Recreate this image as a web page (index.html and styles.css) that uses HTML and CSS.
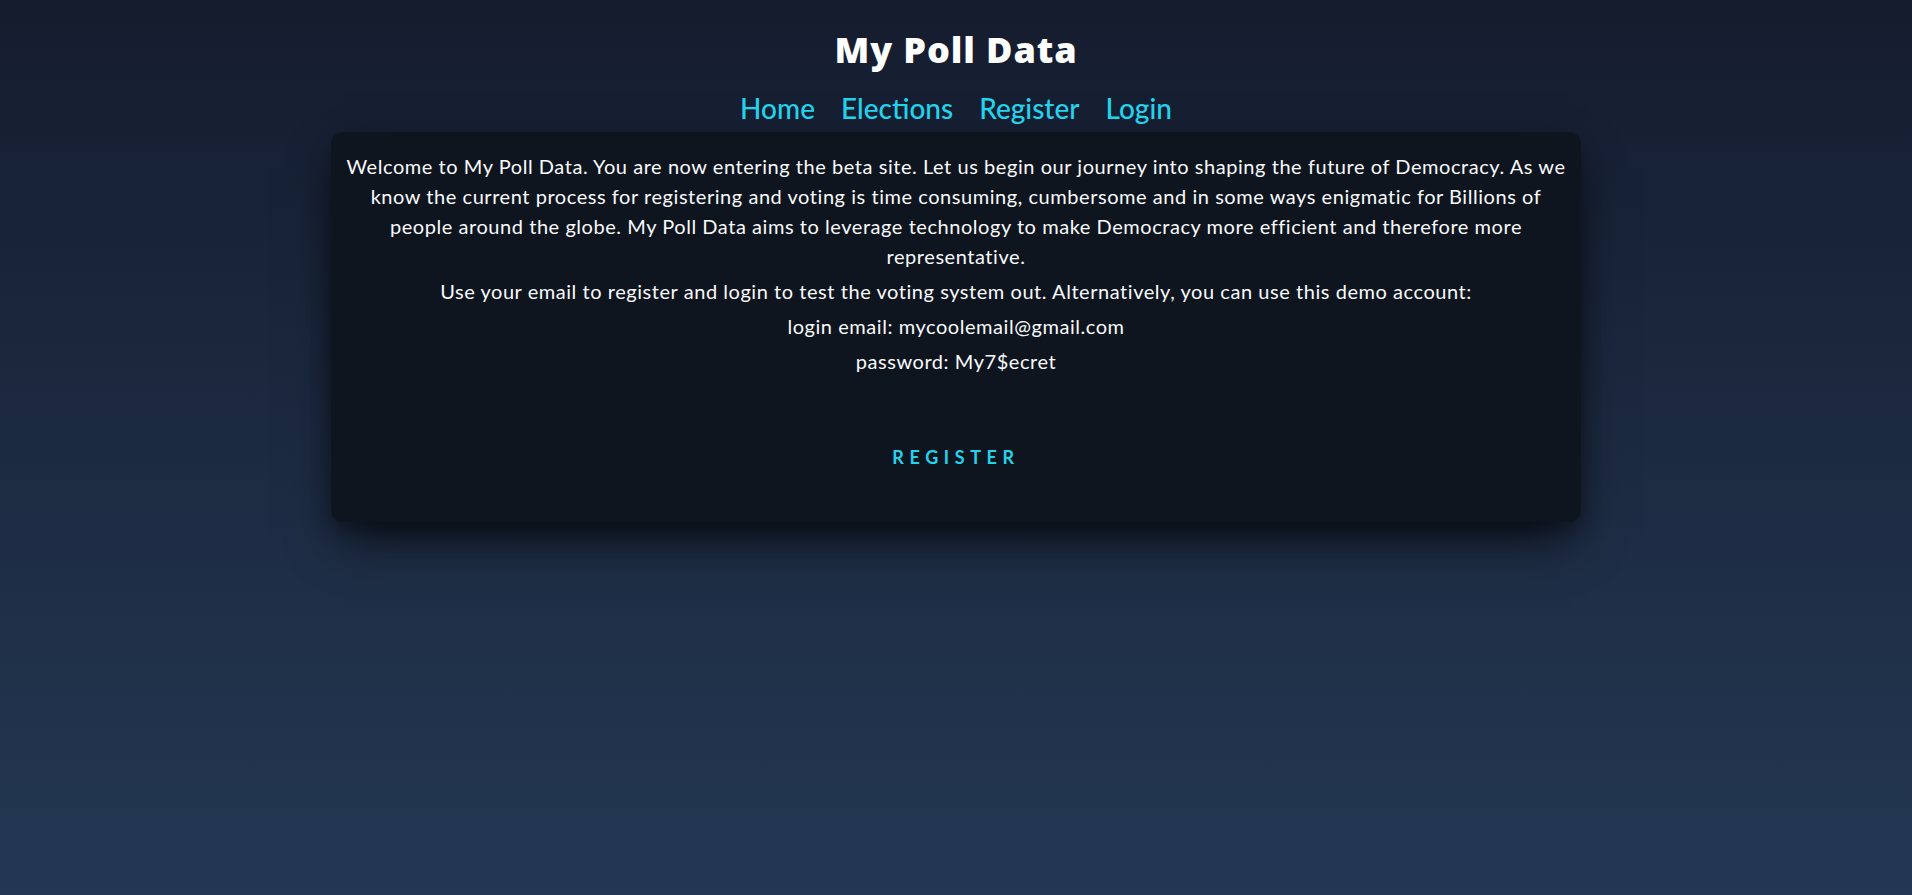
FILE: index.html
```html
<!DOCTYPE html>
<html lang="en">
<head>
<meta charset="utf-8">
<title>My Poll Data</title>
<link rel="stylesheet" href="styles.css">
</head>
<body>
<header class="site-header">
  <h1 class="site-title">My Poll Data</h1>
  <nav class="site-nav">
    <a href="#" class="nav-link">Home</a>
    <a href="#" class="nav-link">Elections</a>
    <a href="#" class="nav-link">Register</a>
    <a href="#" class="nav-link">Login</a>
  </nav>
</header>
<main class="card">
  <p class="intro">Welcome to My Poll Data. You are now entering the beta site. Let us begin our journey into shaping the future of Democracy. As we know the current process for registering and voting is time consuming, cumbersome and in some ways enigmatic for Billions of people around the globe. My Poll Data aims to leverage technology to make Democracy more efficient and therefore more representative.</p>
  <p class="intro">Use your email to register and login to test the voting system out. Alternatively, you can use this demo account:</p>
  <p class="intro">login email: mycoolemail@gmail.com</p>
  <p class="intro">password: My7$ecret</p>
  <div class="actions">
    <a href="#" class="register-btn">Register</a>
  </div>
</main>
</body>
</html>
```

FILE: styles.css
```css
html, body {
  margin: 0;
  padding: 0;
}

body {
  min-height: 100vh;
  background: linear-gradient(to bottom, #151c2e 0%, #1c2a41 50%, #243853 100%);
  font-family: "Lato", "Noto Sans", sans-serif;
  color: #f8fafc;
}

.site-header {
  display: flex;
  flex-direction: column;
  align-items: center;
  padding-top: 23px;
}

.site-title {
  margin: 0;
  font-family: "Open Sans", "Lato", sans-serif;
  font-size: 36px;
  line-height: 54px;
  font-weight: 800;
  color: #ffffff;
  letter-spacing: 0.9px;
}

.site-nav {
  display: flex;
  gap: 26px;
  margin-top: 12px;
}

.nav-link {
  color: #22d3ee;
  text-decoration: none;
  font-size: 28px;
  line-height: 39px;
  font-weight: 500;
}

.card {
  box-sizing: border-box;
  width: 1250px;
  margin: 4px auto 0;
  padding: 19px 8px 0;
  background: #0f151f;
  border-radius: 12px;
  box-shadow: 0 25px 50px -12px rgba(0, 0, 0, 0.75), 0 10px 20px rgba(0, 0, 0, 0.25);
  text-align: center;
}

.intro {
  margin: 0 0 5px;
  font-size: 20px;
  line-height: 30px;
  letter-spacing: 0.55px;
}

.actions {
  display: flex;
  justify-content: center;
  padding: 52px 0 40px;
}

.register-btn {
  padding: 12px 24px;
  color: #22d3ee;
  text-decoration: none;
  text-transform: uppercase;
  font-size: 18px;
  line-height: 25px;
  font-weight: 700;
  letter-spacing: 0.31em;
}
```
